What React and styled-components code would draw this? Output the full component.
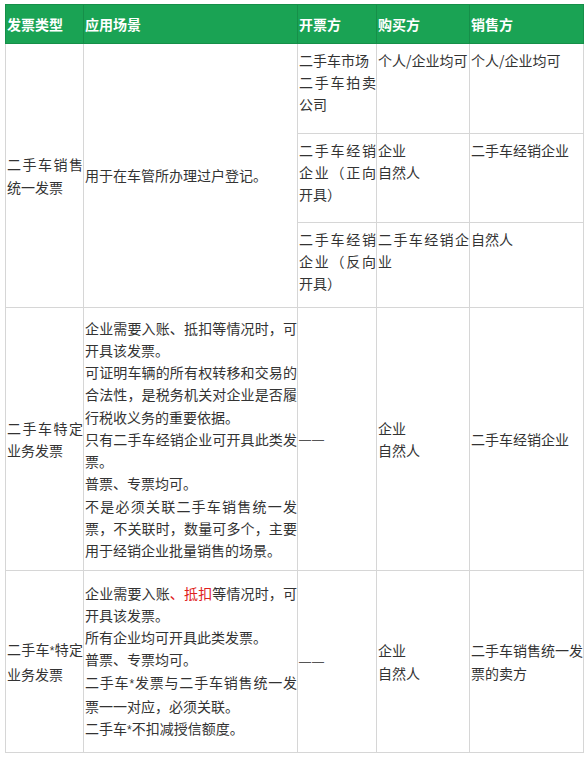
import React from "react";
import styled, { createGlobalStyle } from "styled-components";

const Global = createGlobalStyle`
  html, body { margin: 0; padding: 0; background: #ffffff; }
  body {
    font-family: "Noto Sans CJK SC", "Noto Sans", "Liberation Sans", sans-serif;
    color: #333333;
  }
`;

const Page = styled.div`
  padding: 4px 4px 6px 5px;
`;

const Table = styled.table`
  border-collapse: collapse;
  table-layout: fixed;
  width: 578px;
  font-size: 14px;
  line-height: 22.2px;
`;

const Row = styled.tr`
  height: ${(p) => p.$h}px;
`;

const HeadCell = styled.th`
  background: #1aa354;
  color: #ffffff;
  font-weight: 700;
  text-align: left;
  padding: 0 0 0 1px;
  border: 1px solid #168f49;
  vertical-align: middle;
`;

const Cell = styled.td`
  border: 1px solid #d6d6d6;
  padding: ${(p) => (p.$top ? "5px 0 0 1px" : "0 0 0 1px")};
  vertical-align: ${(p) => (p.$top ? "top" : "middle")};
  text-align: justify;
  color: #333333;
  word-break: break-all;
`;

const Red = styled.span`
  color: #e02020;
`;

const Star = styled.span`
  font-family: "Liberation Sans", sans-serif;
  font-size: 12px;
`;

const Dash = styled.span`
  font-family: "Liberation Sans", sans-serif;
  font-size: 12px;
  letter-spacing: 1px;
  color: #555555;
`;

const cols = [78, 214, 79, 93, 114];

export default function App() {
  return (
    <>
      <Global />
      <Page>
        <Table>
          <colgroup>
            {cols.map((w, i) => (
              <col key={i} style={{ width: w }} />
            ))}
          </colgroup>
          <thead>
            <Row $h={39}>
              <HeadCell>发票类型</HeadCell>
              <HeadCell>应用场景</HeadCell>
              <HeadCell>开票方</HeadCell>
              <HeadCell>购买方</HeadCell>
              <HeadCell>销售方</HeadCell>
            </Row>
          </thead>
          <tbody>
            <Row $h={90}>
              <Cell rowSpan={3}>二手车销售统一发票</Cell>
              <Cell rowSpan={3}>用于在车管所办理过户登记。</Cell>
              <Cell $top>
                二手车市场
                <br />
                二手车拍卖公司
              </Cell>
              <Cell $top>个人/企业均可</Cell>
              <Cell $top>个人/企业均可</Cell>
            </Row>
            <Row $h={89}>
              <Cell $top>二手车经销企业（正向开具）</Cell>
              <Cell $top>
                企业
                <br />
                自然人
              </Cell>
              <Cell $top>二手车经销企业</Cell>
            </Row>
            <Row $h={85}>
              <Cell $top>二手车经销企业（反向开具）</Cell>
              <Cell $top>二手车经销企业</Cell>
              <Cell $top>自然人</Cell>
            </Row>
            <Row $h={263}>
              <Cell>二手车特定业务发票</Cell>
              <Cell>
                企业需要入账、抵扣等情况时，可开具该发票。
                <br />
                可证明车辆的所有权转移和交易的合法性，是税务机关对企业是否履行税收义务的重要依据。
                <br />
                只有二手车经销企业可开具此类发票。
                <br />
                普票、专票均可。
                <br />
                不是必须关联二手车销售统一发票，不关联时，数量可多个，主要用于经销企业批量销售的场景。
              </Cell>
              <Cell>
                <Dash>——</Dash>
              </Cell>
              <Cell>
                企业
                <br />
                自然人
              </Cell>
              <Cell>二手车经销企业</Cell>
            </Row>
            <Row $h={182}>
              <Cell>
                二手车<Star>*</Star>特定业务发票
              </Cell>
              <Cell>
                企业需要入账<Red>、抵扣</Red>等情况时，可开具该发票。
                <br />
                所有企业均可开具此类发票。
                <br />
                普票、专票均可。
                <br />
                二手车<Star>*</Star>发票与二手车销售统一发票一一对应，必须关联。
                <br />
                二手车<Star>*</Star>不扣减授信额度。
              </Cell>
              <Cell>
                <Dash>——</Dash>
              </Cell>
              <Cell>
                企业
                <br />
                自然人
              </Cell>
              <Cell>二手车销售统一发票的卖方</Cell>
            </Row>
          </tbody>
        </Table>
      </Page>
    </>
  );
}
